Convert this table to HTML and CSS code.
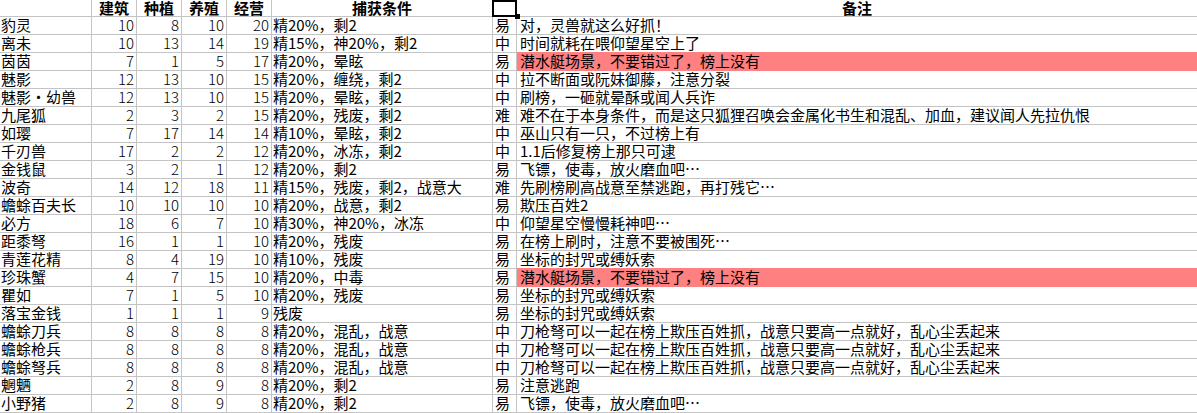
FILE: index.html
```html
<!DOCTYPE html>
<html lang="zh-CN">
<head>
<meta charset="utf-8">
<title>灵兽捕获表</title>
<link rel="stylesheet" href="styles.css">
</head>
<body>
<div class="sheet">
  <div class="row head">
    <div class="c name"></div>
    <div class="c hd">建筑</div>
    <div class="c hd">种植</div>
    <div class="c hd">养殖</div>
    <div class="c hd">经营</div>
    <div class="c hd">捕获条件</div>
    <div class="c diff sel-host"><span class="sel"><span class="handle"></span></span></div>
    <div class="c hd">备注</div>
  </div>
  <div class="row"><div class="c name">豹灵</div><div class="c num">10</div><div class="c num">8</div><div class="c num">10</div><div class="c num">20</div><div class="c cond">精20%，剩2</div><div class="c diff">易</div><div class="c note">对，灵兽就这么好抓！</div></div>
  <div class="row"><div class="c name">离未</div><div class="c num">10</div><div class="c num">13</div><div class="c num">14</div><div class="c num">19</div><div class="c cond">精15%，神20%，剩2</div><div class="c diff">中</div><div class="c note">时间就耗在喂仰望星空上了</div></div>
  <div class="row"><div class="c name">茵茵</div><div class="c num">7</div><div class="c num">1</div><div class="c num">5</div><div class="c num">17</div><div class="c cond">精20%，晕眩</div><div class="c diff">易</div><div class="c note hl">潜水艇场景，不要错过了，榜上没有</div></div>
  <div class="row"><div class="c name">魅影</div><div class="c num">12</div><div class="c num">13</div><div class="c num">10</div><div class="c num">15</div><div class="c cond">精20%，缠绕，剩2</div><div class="c diff">中</div><div class="c note">拉不断面或阮妹御藤，注意分裂</div></div>
  <div class="row"><div class="c name">魅影<span class="dot">•</span>幼兽</div><div class="c num">12</div><div class="c num">13</div><div class="c num">10</div><div class="c num">15</div><div class="c cond">精20%，晕眩，剩2</div><div class="c diff">中</div><div class="c note">刷榜，一砸就晕酥或闻人兵诈</div></div>
  <div class="row"><div class="c name">九尾狐</div><div class="c num">2</div><div class="c num">3</div><div class="c num">2</div><div class="c num">15</div><div class="c cond">精20%，残废，剩2</div><div class="c diff">难</div><div class="c note">难不在于本身条件，而是这只狐狸召唤会金属化书生和混乱、加血，建议闻人先拉仇恨</div></div>
  <div class="row"><div class="c name">如璎</div><div class="c num">7</div><div class="c num">17</div><div class="c num">14</div><div class="c num">14</div><div class="c cond">精10%，晕眩，剩2</div><div class="c diff">中</div><div class="c note">巫山只有一只，不过榜上有</div></div>
  <div class="row"><div class="c name">千刃兽</div><div class="c num">17</div><div class="c num">2</div><div class="c num">2</div><div class="c num">12</div><div class="c cond">精20%，冰冻，剩2</div><div class="c diff">中</div><div class="c note">1.1后修复榜上那只可逮</div></div>
  <div class="row"><div class="c name">金钱鼠</div><div class="c num">3</div><div class="c num">2</div><div class="c num">1</div><div class="c num">12</div><div class="c cond">精20%，剩2</div><div class="c diff">易</div><div class="c note">飞镖，使毒，放火磨血吧…</div></div>
  <div class="row"><div class="c name">波奇</div><div class="c num">14</div><div class="c num">12</div><div class="c num">18</div><div class="c num">11</div><div class="c cond">精15%，残废，剩2，战意大</div><div class="c diff">难</div><div class="c note">先刷榜刷高战意至禁逃跑，再打残它…</div></div>
  <div class="row"><div class="c name">蟾蜍百夫长</div><div class="c num">10</div><div class="c num">10</div><div class="c num">10</div><div class="c num">10</div><div class="c cond">精20%，战意，剩2</div><div class="c diff">易</div><div class="c note">欺压百姓2</div></div>
  <div class="row"><div class="c name">必方</div><div class="c num">18</div><div class="c num">6</div><div class="c num">7</div><div class="c num">10</div><div class="c cond">精30%，神20%，冰冻</div><div class="c diff">中</div><div class="c note">仰望星空慢慢耗神吧…</div></div>
  <div class="row"><div class="c name">距黍弩</div><div class="c num">16</div><div class="c num">1</div><div class="c num">1</div><div class="c num">10</div><div class="c cond">精20%，残废</div><div class="c diff">易</div><div class="c note">在榜上刷时，注意不要被围死…</div></div>
  <div class="row"><div class="c name">青莲花精</div><div class="c num">8</div><div class="c num">4</div><div class="c num">19</div><div class="c num">10</div><div class="c cond">精10%，残废</div><div class="c diff">易</div><div class="c note">坐标的封咒或缚妖索</div></div>
  <div class="row"><div class="c name">珍珠蟹</div><div class="c num">4</div><div class="c num">7</div><div class="c num">15</div><div class="c num">10</div><div class="c cond">精20%，中毒</div><div class="c diff">易</div><div class="c note hl">潜水艇场景，不要错过了，榜上没有</div></div>
  <div class="row"><div class="c name">瞿如</div><div class="c num">7</div><div class="c num">1</div><div class="c num">5</div><div class="c num">10</div><div class="c cond">精20%，残废</div><div class="c diff">易</div><div class="c note">坐标的封咒或缚妖索</div></div>
  <div class="row"><div class="c name">落宝金钱</div><div class="c num">1</div><div class="c num">1</div><div class="c num">1</div><div class="c num">9</div><div class="c cond">残废</div><div class="c diff">易</div><div class="c note">坐标的封咒或缚妖索</div></div>
  <div class="row"><div class="c name">蟾蜍刀兵</div><div class="c num">8</div><div class="c num">8</div><div class="c num">8</div><div class="c num">8</div><div class="c cond">精20%，混乱，战意</div><div class="c diff">中</div><div class="c note">刀枪弩可以一起在榜上欺压百姓抓，战意只要高一点就好，乱心尘丢起来</div></div>
  <div class="row"><div class="c name">蟾蜍枪兵</div><div class="c num">8</div><div class="c num">8</div><div class="c num">8</div><div class="c num">8</div><div class="c cond">精20%，混乱，战意</div><div class="c diff">中</div><div class="c note">刀枪弩可以一起在榜上欺压百姓抓，战意只要高一点就好，乱心尘丢起来</div></div>
  <div class="row"><div class="c name">蟾蜍弩兵</div><div class="c num">8</div><div class="c num">8</div><div class="c num">8</div><div class="c num">8</div><div class="c cond">精20%，混乱，战意</div><div class="c diff">中</div><div class="c note">刀枪弩可以一起在榜上欺压百姓抓，战意只要高一点就好，乱心尘丢起来</div></div>
  <div class="row"><div class="c name">魍魉</div><div class="c num">2</div><div class="c num">8</div><div class="c num">9</div><div class="c num">8</div><div class="c cond">精20%，剩2</div><div class="c diff">易</div><div class="c note">注意逃跑</div></div>
  <div class="row"><div class="c name">小野猪</div><div class="c num">2</div><div class="c num">8</div><div class="c num">9</div><div class="c num">8</div><div class="c cond">精20%，剩2</div><div class="c diff">易</div><div class="c note">飞镖，使毒，放火磨血吧…</div></div>
</div>
</body>
</html>
```
FILE: styles.css
```css
html, body {
  margin: 0;
  padding: 0;
  background: #ffffff;
}

.sheet {
  display: grid;
  grid-template-columns: 91px 44px 44px 44px 44px 220px 23px 680px;
  grid-auto-rows: 17px;
  grid-template-rows: 16px;
  gap: 1px;
  padding-bottom: 1px;
  background: #c4c4c4;
  width: 1197px;
  font-family: "Noto Sans CJK SC", "Noto Sans", sans-serif;
  font-size: 15px;
  color: #000;
}

.row {
  display: contents;
}

.c {
  background: #ffffff;
  line-height: 16px;
  white-space: nowrap;
  overflow: visible;
  padding: 0 2px;
}

.head .c {
  line-height: 16px;
}

.hd {
  font-weight: 700;
  text-align: center;
}

.name {
  padding-left: 1px;
}

.num {
  text-align: right;
  padding-right: 2px;
  font-weight: 300;
}

.cond {
  padding-left: 1px;
}

.diff {
  padding-left: 2px;
}

.note {
  padding-left: 3px;
}

.hl {
  background: #ff8080;
  box-shadow: 0 -1px 0 #ff8080, 0 1px 0 #ff8080;
  position: relative;
  z-index: 1;
}

.dot {
  display: inline-block;
  width: 15px;
  text-align: center;
}

.sel-host {
  position: relative;
}

.sel {
  position: absolute;
  left: -1px;
  top: 0;
  width: 25px;
  height: 17px;
  box-sizing: border-box;
  border: 2px solid #000;
  z-index: 3;
}

.handle {
  position: absolute;
  left: 21px;
  top: 12px;
  width: 5px;
  height: 5px;
  background: #000;
}
```
